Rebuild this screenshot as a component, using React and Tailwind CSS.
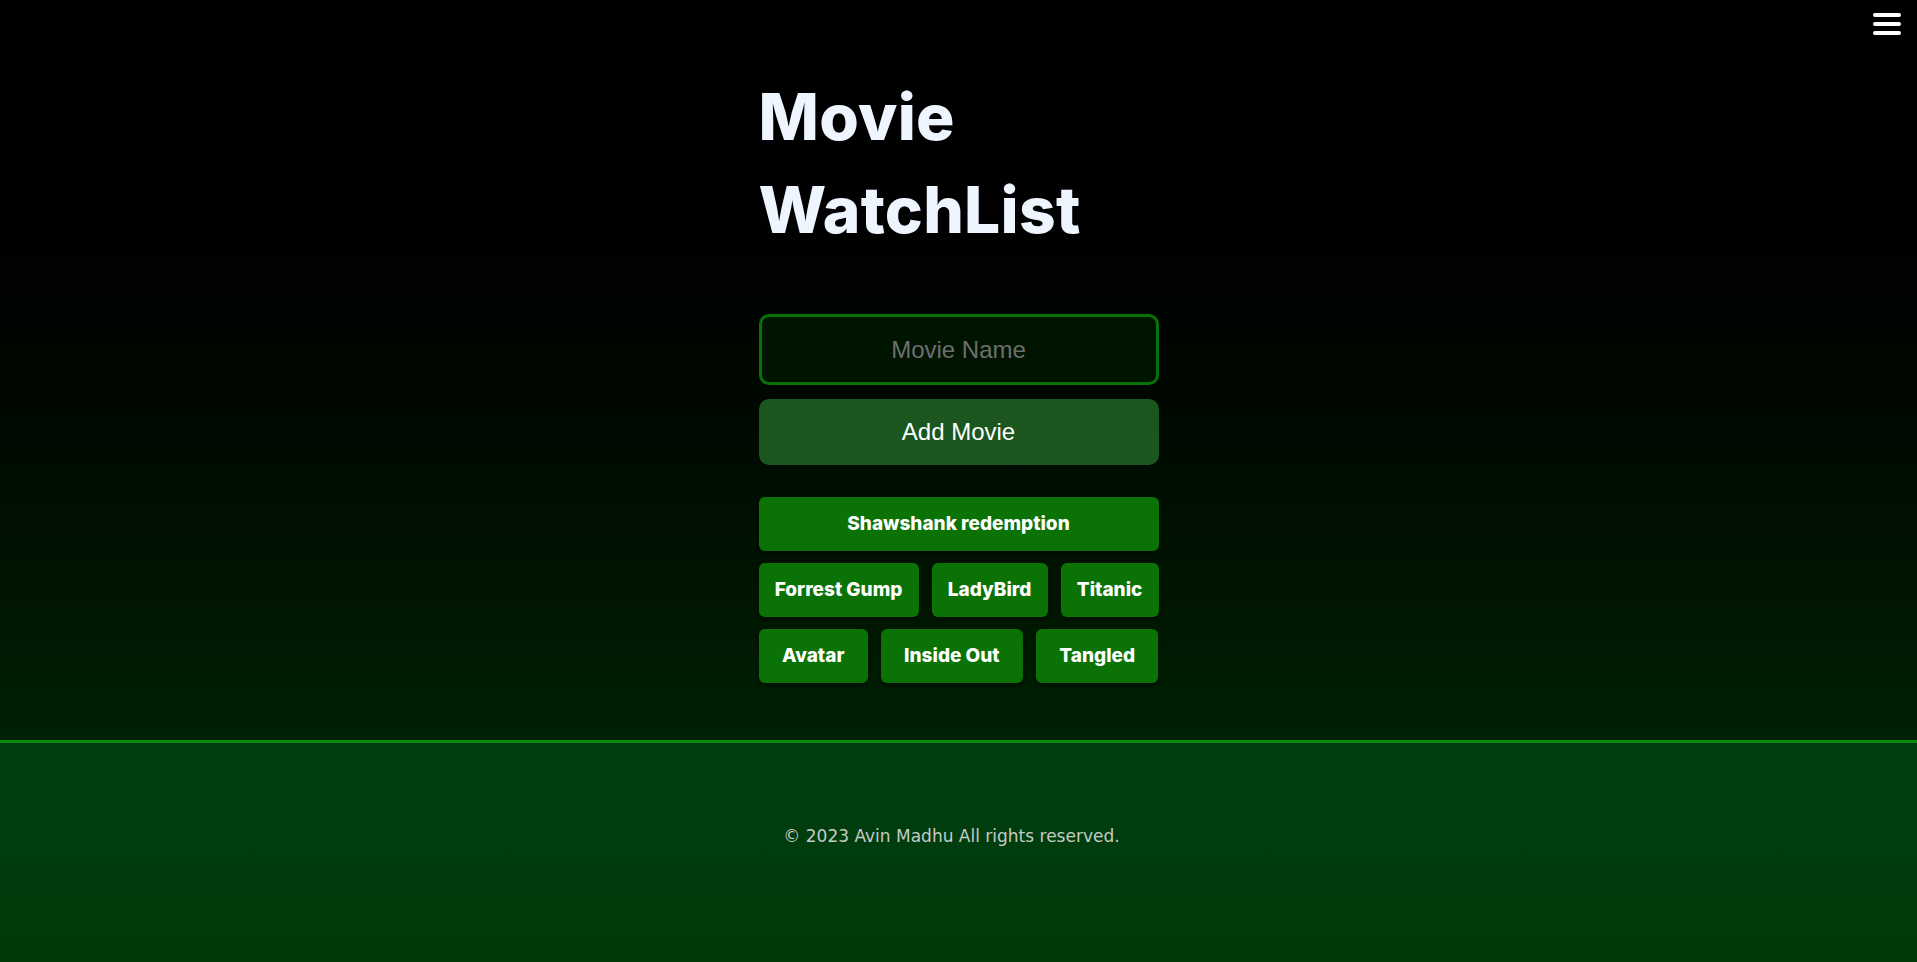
import { useState } from 'react';

const initialMovies = [
  'Shawshank redemption',
  'Forrest Gump',
  'LadyBird',
  'Titanic',
  'Avatar',
  'Inside Out',
  'Tangled',
];

export default function App() {
  const [movies, setMovies] = useState(initialMovies);
  const [name, setName] = useState('');

  const addMovie = () => {
    if (!name.trim()) return;
    setMovies([...movies, name.trim()]);
    setName('');
  };

  return (
    <div className="min-h-screen flex flex-col bg-gradient-to-b from-black to-[#003308]">
      {/* hamburger */}
      <button className="absolute top-[13px] right-4 flex flex-col gap-[5px] w-7">
        <span className="block h-1 w-7 rounded-sm bg-white" />
        <span className="block h-1 w-7 rounded-sm bg-white" />
        <span className="block h-1 w-7 rounded-sm bg-white" />
      </button>

      <main className="flex-1 flex justify-center pt-[70px] pb-[56px]">
        <div className="w-[400px] flex flex-col">
          <h1 className="font-['Inter',sans-serif] font-extrabold text-[64px] leading-[93px] text-[#eef5ff] tracking-[0.3px]">
            Movie
            <br />
            WatchList
          </h1>

          <input
            value={name}
            onChange={(e) => setName(e.target.value)}
            placeholder="Movie Name"
            className="mt-[58px] h-[71px] w-full rounded-[10px] border-[3px] border-[#077207] bg-[#001500] text-center text-2xl text-white placeholder:text-[#6e6e6e] font-['Liberation_Sans',Arial,sans-serif] outline-none"
          />
          <button
            onClick={addMovie}
            className="mt-[14px] h-[66px] w-full rounded-[10px] bg-[#1a561e] text-2xl text-white font-['Liberation_Sans',Arial,sans-serif]"
          >
            Add Movie
          </button>

          <div className="mt-[32px] flex flex-wrap gap-x-[13px] gap-y-3">
            {movies.map((m, i) => (
              <button
                key={i}
                className="grow h-[54px] px-[15px] rounded-md bg-[#0b7306] text-white text-[19px] font-extrabold font-['Inter',sans-serif] shadow-[0_2px_4px_rgba(0,0,0,0.5)]"
              >
                {m}
              </button>
            ))}
          </div>
        </div>
      </main>

      <footer className="h-[222px] border-t-[3px] border-[#068b0a] bg-gradient-to-b from-[#003e0f] via-[#003d0e] to-[#00390a] flex justify-center pt-[81px]">
        <p className="font-['DejaVu_Sans',sans-serif] text-[17px] text-[#c3cbc3] pr-[14px]">
          © 2023 Avin Madhu All rights reserved.
        </p>
      </footer>
    </div>
  );
}
